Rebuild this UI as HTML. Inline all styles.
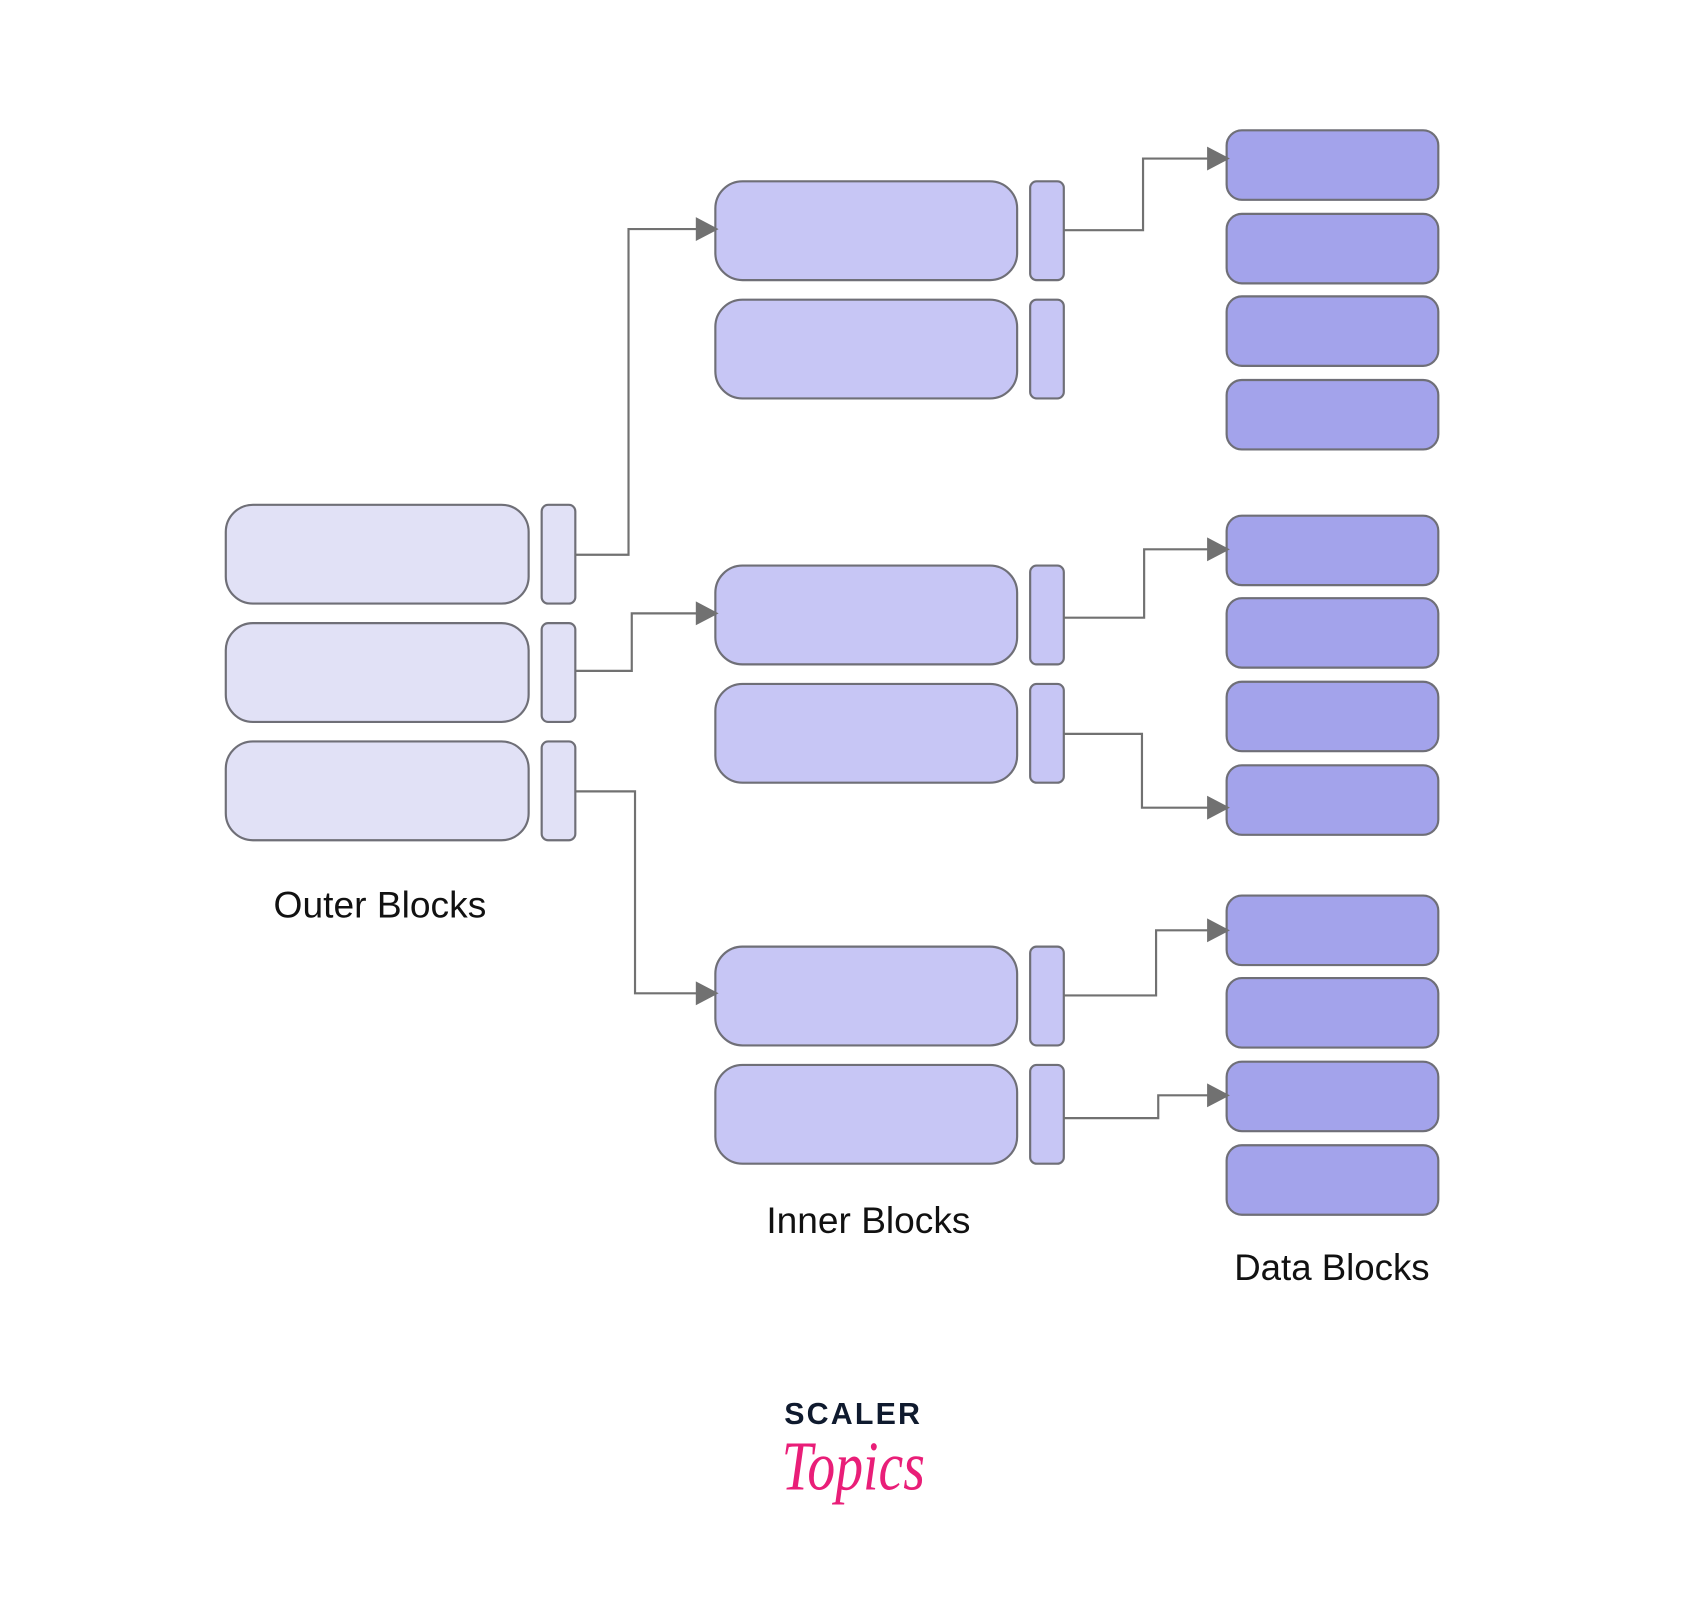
<!DOCTYPE html>
<html><head><meta charset="utf-8"><style>html,body{margin:0;padding:0;background:#fff}svg{display:block}</style></head>
<body>
<svg width="1701" height="1611" viewBox="0 0 1567 1484" xmlns="http://www.w3.org/2000/svg">
<g stroke="#6f6f77" stroke-width="2">
<g fill="#e1e1f6">
<rect x="208" y="465" width="279" height="91" rx="25"/>
<rect x="208" y="574" width="279" height="91" rx="25"/>
<rect x="208" y="683" width="279" height="91" rx="25"/>
<rect x="499" y="465" width="31" height="91" rx="6"/>
<rect x="499" y="574" width="31" height="91" rx="6"/>
<rect x="499" y="683" width="31" height="91" rx="6"/>
</g>
<g fill="#c7c6f5">
<rect x="659" y="167" width="278" height="91" rx="25"/>
<rect x="659" y="276" width="278" height="91" rx="25"/>
<rect x="659" y="521" width="278" height="91" rx="25"/>
<rect x="659" y="630" width="278" height="91" rx="25"/>
<rect x="659" y="872" width="278" height="91" rx="25"/>
<rect x="659" y="981" width="278" height="91" rx="25"/>
<rect x="949" y="167" width="31" height="91" rx="6"/>
<rect x="949" y="276" width="31" height="91" rx="6"/>
<rect x="949" y="521" width="31" height="91" rx="6"/>
<rect x="949" y="630" width="31" height="91" rx="6"/>
<rect x="949" y="872" width="31" height="91" rx="6"/>
<rect x="949" y="981" width="31" height="91" rx="6"/>
</g>
<g fill="#a3a3eb">
<rect x="1130" y="120" width="195" height="64" rx="14"/>
<rect x="1130" y="197" width="195" height="64" rx="14"/>
<rect x="1130" y="273" width="195" height="64" rx="14"/>
<rect x="1130" y="350" width="195" height="64" rx="14"/>
<rect x="1130" y="475" width="195" height="64" rx="14"/>
<rect x="1130" y="551" width="195" height="64" rx="14"/>
<rect x="1130" y="628" width="195" height="64" rx="14"/>
<rect x="1130" y="705" width="195" height="64" rx="14"/>
<rect x="1130" y="825" width="195" height="64" rx="14"/>
<rect x="1130" y="901" width="195" height="64" rx="14"/>
<rect x="1130" y="978" width="195" height="64" rx="14"/>
<rect x="1130" y="1055" width="195" height="64" rx="14"/>
</g>
</g>
<g fill="none" stroke="#717171" stroke-width="2">
<path d="M530 511 H579 V211 H642"/>
<path d="M530 618 H582 V565 H642"/>
<path d="M530 729 H585 V915 H642"/>
<path d="M980 212 H1053 V146 H1113"/>
<path d="M980 569 H1054 V506 H1113"/>
<path d="M980 676 H1052 V744 H1113"/>
<path d="M980 917 H1065 V857 H1113"/>
<path d="M980 1030 H1067 V1009 H1113"/>
</g>
<g fill="#717171">
<path d="M641 200 L662 211 L641 222 z"/>
<path d="M641 554 L662 565 L641 576 z"/>
<path d="M641 904 L662 915 L641 926 z"/>
<path d="M1112 135 L1133 146 L1112 157 z"/>
<path d="M1112 495 L1133 506 L1112 517 z"/>
<path d="M1112 733 L1133 744 L1112 755 z"/>
<path d="M1112 846 L1133 857 L1112 868 z"/>
<path d="M1112 998 L1133 1009 L1112 1020 z"/>
</g>
<g font-family="Liberation Sans, sans-serif" font-size="34" fill="#111" text-anchor="middle">
<text x="350" y="845" textLength="196" lengthAdjust="spacingAndGlyphs">Outer Blocks</text>
<text x="800" y="1136" textLength="188" lengthAdjust="spacingAndGlyphs">Inner Blocks</text>
<text x="1227" y="1179" textLength="180" lengthAdjust="spacingAndGlyphs">Data Blocks</text>
</g>
<text x="786" y="1312" text-anchor="middle" font-family="Liberation Sans, sans-serif" font-weight="bold" font-size="28" letter-spacing="2" fill="#0f1a2e">SCALER</text>
<text x="786" y="1372" text-anchor="middle" font-family="Liberation Serif, serif" font-style="italic" font-size="64" fill="#e91e78" textLength="132" lengthAdjust="spacingAndGlyphs">Topics</text>
</svg>
</body></html>
